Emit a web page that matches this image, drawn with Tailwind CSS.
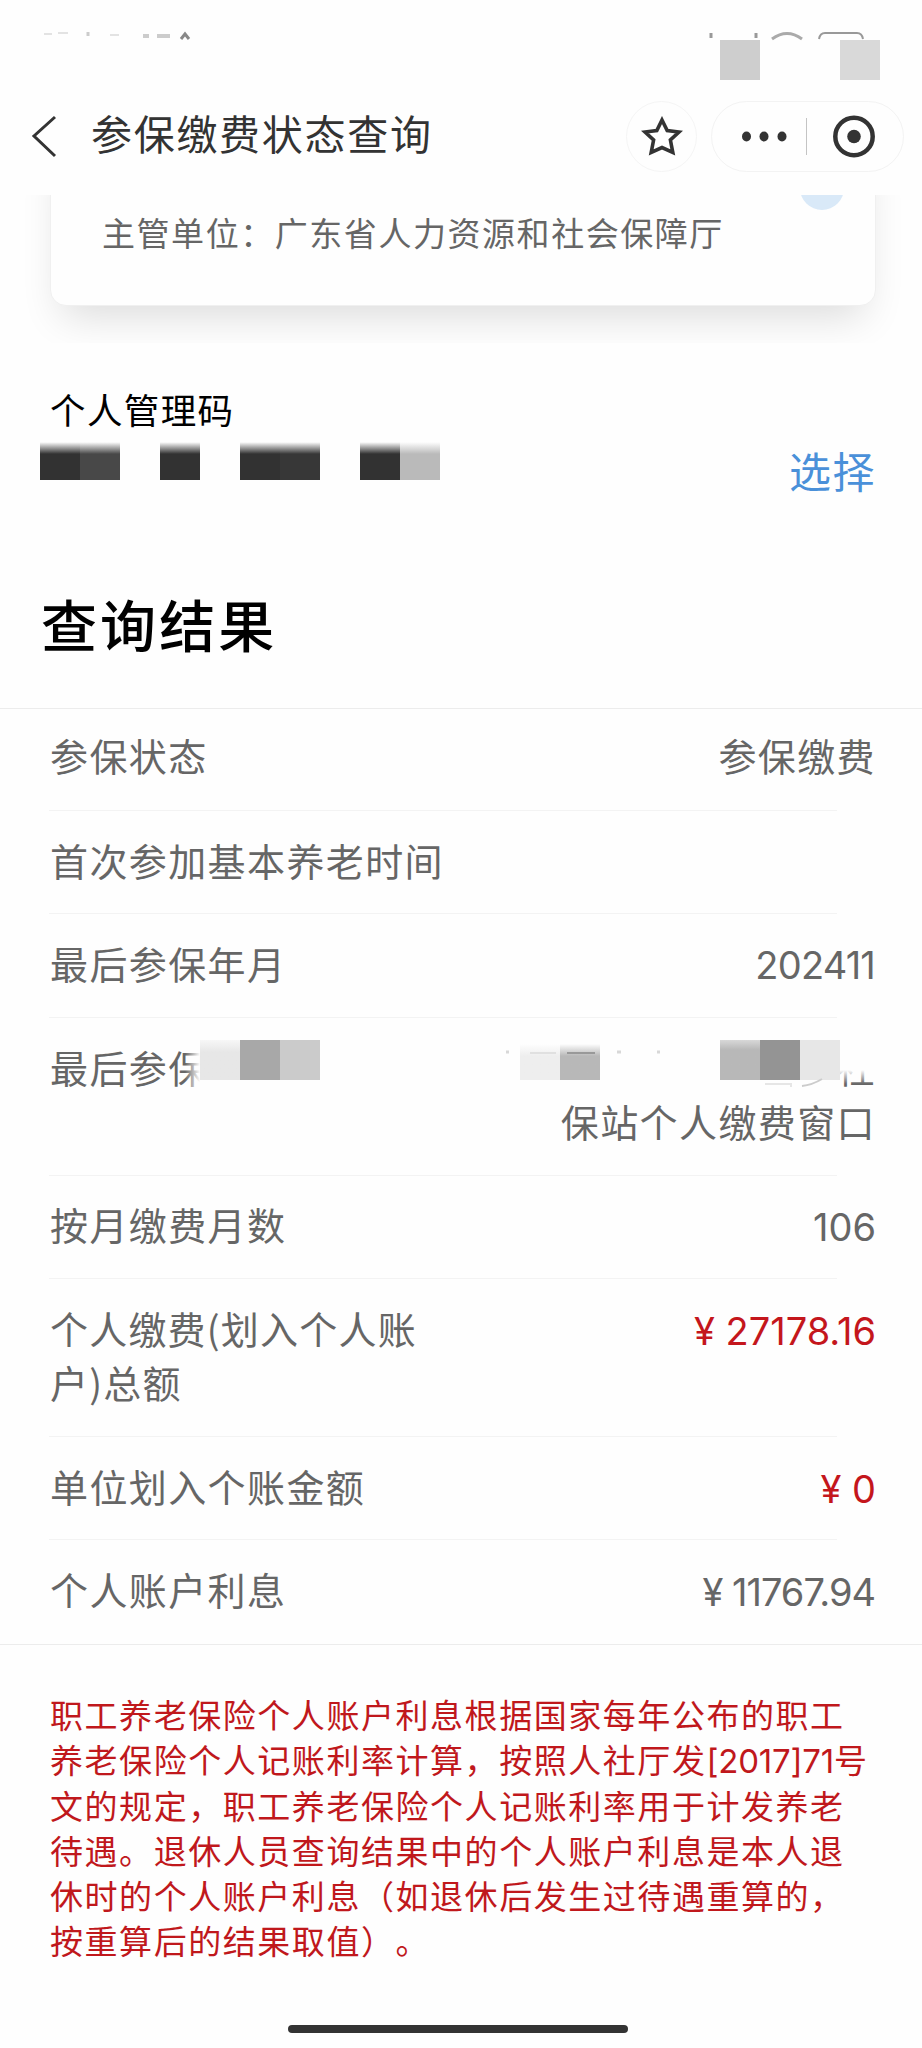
<!DOCTYPE html>
<html lang="zh-CN">
<head>
  <meta charset="UTF-8" />
  <meta name="viewport" content="width=device-width, initial-scale=1.0"/>
  <title>参保缴费状态查询</title>
  <script src="https://cdn.jsdelivr.net/npm/@tailwindcss/browser@4"></script>
</head>
<body class="bg-[#fefefe] font-['Noto_Sans_CJK_SC',sans-serif] text-[#666]">
  <div class="w-[922px] h-[2048px] overflow-hidden flex flex-col">

    <!-- Status bar -->
    <div class="h-[80px] shrink-0">
      <svg class="block" width="922" height="80" viewBox="0 0 922 80" fill="none">
        <g stroke="#ccc" stroke-width="2">
          <path d="M44 34h8M58 33h10M110 35h9" stroke="#e3e3e3"/>
          <path d="M88 32v4" stroke-width="3"/>
          <path d="M143 36h6M157 36h13" stroke-width="4"/>
          <path d="M181 39l4-5l4 5" stroke="#888" stroke-width="3"/>
          <path d="M711 33v5M756 33v5" stroke="#999" stroke-width="3"/>
          <path d="M772 39q15-11 30 0" stroke="#aaa" stroke-width="3"/>
          <path d="M819 39q1-6 6-6h32q5 0 6 6" stroke="#999"/>
        </g>
        <rect x="720" y="40" width="40" height="40" fill="#cecece"/>
        <rect x="840" y="40" width="40" height="40" fill="#d9d9d9"/>
      </svg>
    </div>

    <!-- Title bar -->
    <div class="h-[115px] shrink-0 flex items-center pb-[2px] pl-[30px] pr-[18px] text-[#333]">
      <svg width="28" height="44" viewBox="0 0 28 44" fill="none" stroke="#333" stroke-width="3">
        <path d="M25 2L4 21L25 41"/>
      </svg>
      <h1 class="ml-[33px] -mt-[8px] text-[41px] tracking-[1.700px] leading-none">参保缴费状态查询</h1>
      <div class="ml-auto size-[71px] rounded-full border border-[#f5f5f5] flex items-center justify-center">
        <svg width="42" height="42" viewBox="0 0 42 42" fill="none" stroke="#333" stroke-width="3.600">
          <path d="M21 4L26.200 14.500L38 16L29.400 24L31.800 36.500L21 31.500L10.200 36.500L12.600 24L4 16L15.800 14.500Z"/>
        </svg>
      </div>
      <div class="ml-[14px] w-[193px] h-[71px] rounded-full border border-[#f3f3f3] flex items-center">
        <svg width="191" height="69" viewBox="0 0 191 69" fill="#333">
          <ellipse cx="34.500" cy="34.500" rx="4.500" ry="5"/>
          <ellipse cx="52" cy="34.500" rx="4.500" ry="5"/>
          <ellipse cx="70" cy="34.500" rx="4.500" ry="5"/>
          <path d="M94.500 16v37" stroke="#c4c4c4"/>
          <circle cx="142" cy="34.500" r="18.700" fill="none" stroke="#333" stroke-width="4.500"/>
          <circle cx="142" cy="34.500" r="6.800"/>
        </svg>
      </div>
    </div>

    <!-- Service card, scrolled under the title bar -->
    <div class="h-[148px] shrink-0 overflow-hidden pl-[50px] pr-[46px]">
      <div class="relative -mt-[60px] h-[171px] rounded-[16px] border border-[#f0f0f0] bg-[#fefefe] shadow-[0_22px_40px_-12px_rgba(0,0,0,0.14)]">
        <p class="pt-[72px] pl-[51px] text-[33px] tracking-[1.550px] leading-[48px]">主管单位：广东省人力资源和社会保障厅</p>
        <div class="absolute top-[30px] right-[31px] size-[44px] rounded-full bg-[#d9e9f8]"></div>
      </div>
    </div>

    <!-- Personal code -->
    <div class="h-[217px] shrink-0 flex justify-between pl-[50px] pr-[46px]">
      <div>
        <p class="mt-[41px] text-[35.500px] tracking-[1.400px] leading-[50px] text-black">个人管理码</p>
        <div class="relative -ml-[10px] mt-[6px] flex h-[40px]">
          <i class="w-[40px] bg-[#323232]"></i>
          <i class="w-[40px] bg-[#484848]"></i>
          <i class="ml-[40px] w-[40px] bg-[#323232]"></i>
          <i class="ml-[40px] w-[40px] bg-[#323232]"></i>
          <i class="w-[40px] bg-[#373737]"></i>
          <i class="ml-[40px] w-[40px] bg-[#323232]"></i>
          <i class="w-[40px] bg-[#bababa]"></i>
          <i class="absolute inset-x-0 top-0 h-[14px] bg-linear-to-b from-[#fefefe] from-15% to-transparent"></i>
        </div>
      </div>
      <a class="mt-[102px] text-[42px] tracking-[1.500px] leading-[50px] text-[#4a90d9]">选择</a>
    </div>

    <h2 class="h-[148px] shrink-0 pl-[41px] pt-[28px] text-[56px] tracking-[3.100px] leading-[70px] font-medium text-black">查询结果</h2>

    <!-- Result list -->
    <div class="shrink-0 h-[937px] border-y border-[#ececec] text-[38px] tracking-[1.400px] leading-[54px]">
      <div class="h-[101px] pt-[19px] pl-[50px] pr-[46px] flex justify-between">
        <span>参保状态</span>
        <span>参保缴费</span>
      </div>
      <div class="h-px ml-[49px] w-[788px] bg-[#f3f3f3]"></div>
      <div class="h-[102px] pt-[22px] pl-[50px]">首次参加基本养老时间</div>
      <div class="h-px ml-[49px] w-[788px] bg-[#f3f3f3]"></div>
      <div class="h-[103px] pt-[22px] pl-[50px] pr-[47px] flex justify-between">
        <span>最后参保年月</span>
        <span class="mt-[2px] font-['Inter'] tracking-[-0.800px]">202411</span>
      </div>
      <div class="h-px ml-[49px] w-[788px] bg-[#f3f3f3]"></div>
      <div class="relative h-[157px] pt-[22px] pl-[50px] pr-[46px] flex justify-between">
        <span>最后参保</span>
        <span class="text-right">社<br>保站个人缴费窗口</span>
        <!-- Redacted parts -->
        <i class="absolute left-[185px] top-[22px] w-[15px] h-[54px] bg-linear-to-r from-transparent to-[#fefefe]"></i>
        <i class="absolute left-[200px] top-[22px] w-[30px] h-[54px] bg-[#fefefe]"></i>
        <i class="absolute left-[832px] top-[22px] w-[46px] h-[30px] bg-[#fefefe]"></i>
        <i class="absolute left-[832px] top-[52px] w-[46px] h-[14px] bg-linear-to-b from-[#fefefe] to-transparent"></i>
        <div class="absolute left-[200px] top-[22px] flex h-[40px]">
          <i class="w-[40px] bg-linear-to-b from-[#f7f7f7] to-[#e7e7e7] to-30%"></i>
          <i class="w-[40px] bg-[#a8a8a8]"></i>
          <i class="w-[40px] bg-[#cbcbcb]"></i>
          <i class="ml-[200px] w-[40px] bg-linear-to-b from-[#fefefe] from-10% to-[#eee] to-40%"></i>
          <i class="w-[40px] bg-linear-to-b from-[#fefefe] from-10% to-[#b8b8b8] to-40%"></i>
          <i class="ml-[120px] w-[40px] bg-linear-to-b from-[#d8d8d8] to-[#b8b8b8] to-25%"></i>
          <i class="w-[40px] bg-[#949494]"></i>
          <i class="w-[40px] bg-[#e7e7e7]"></i>
        </div>
        <svg class="absolute left-[500px] top-[22px]" width="330" height="54" viewBox="0 0 330 54" fill="none" stroke="#ccc" stroke-width="2">
          <path d="M30 13h26" stroke="#e0e0e0"/>
          <path d="M67 13h28" stroke="#999"/>
          <path d="M117 12h4M157 12h3M6 12h3" stroke="#d8d8d8" stroke-width="3"/>
          <path d="M265 44h26v3" stroke="#e6e6e6"/>
          <path d="M302 46q10-1 20-7"/>
        </svg>
      </div>
      <div class="h-px ml-[49px] w-[788px] bg-[#f3f3f3]"></div>
      <div class="h-[102px] pt-[21px] pl-[50px] pr-[46px] flex justify-between">
        <span>按月缴费月数</span>
        <span class="mt-[3px] font-['Inter'] tracking-normal">106</span>
      </div>
      <div class="h-px ml-[49px] w-[788px] bg-[#f3f3f3]"></div>
      <div class="h-[157px] pt-[22px] pl-[50px] pr-[46px] flex justify-between">
        <span class="tracking-[1.200px]">个人缴费(划入个人账<br>户)总额</span>
        <span class="mt-[3px] font-['Inter'] tracking-normal text-[#c4161c]">¥ 27178.16</span>
      </div>
      <div class="h-px ml-[49px] w-[788px] bg-[#f3f3f3]"></div>
      <div class="h-[102px] pt-[22px] pl-[50px] pr-[46px] flex justify-between">
        <span>单位划入个账金额</span>
        <span class="mt-[3px] font-['Inter'] tracking-normal text-[#c4161c]">¥ 0</span>
      </div>
      <div class="h-px ml-[49px] w-[788px] bg-[#f3f3f3]"></div>
      <div class="h-[104px] pt-[22px] pl-[50px] pr-[47px] flex justify-between">
        <span>个人账户利息</span>
        <span class="mt-[3px] font-['Inter'] tracking-[-1px]">¥ 11767.94</span>
      </div>
    </div>

    <!-- Notice -->
    <p class="shrink-0 pt-[47px] pl-[50px] text-[33px] tracking-[1.550px] leading-[45.300px] whitespace-nowrap text-[#c0181c] [text-spacing-trim:space-all]">
      职工养老保险个人账户利息根据国家每年公布的职工<br>
      养老保险个人记账利率计算，按照人社厅发<span class="font-['Inter'] leading-none tracking-[-0.200px]">[2017]71</span>号<br>
      文的规定，职工养老保险个人记账利率用于计发养老<br>
      待遇。退休人员查询结果中的个人账户利息是本人退<br>
      休时的个人账户利息（如退休后发生过待遇重算的，<br>
      按重算后的结果取值）。
    </p>

    <!-- Home indicator -->
    <div class="mt-auto mb-[15px] ml-[288px] w-[340px] h-[8px] shrink-0 rounded-full bg-[#333]"></div>
  </div>
</body>
</html>
